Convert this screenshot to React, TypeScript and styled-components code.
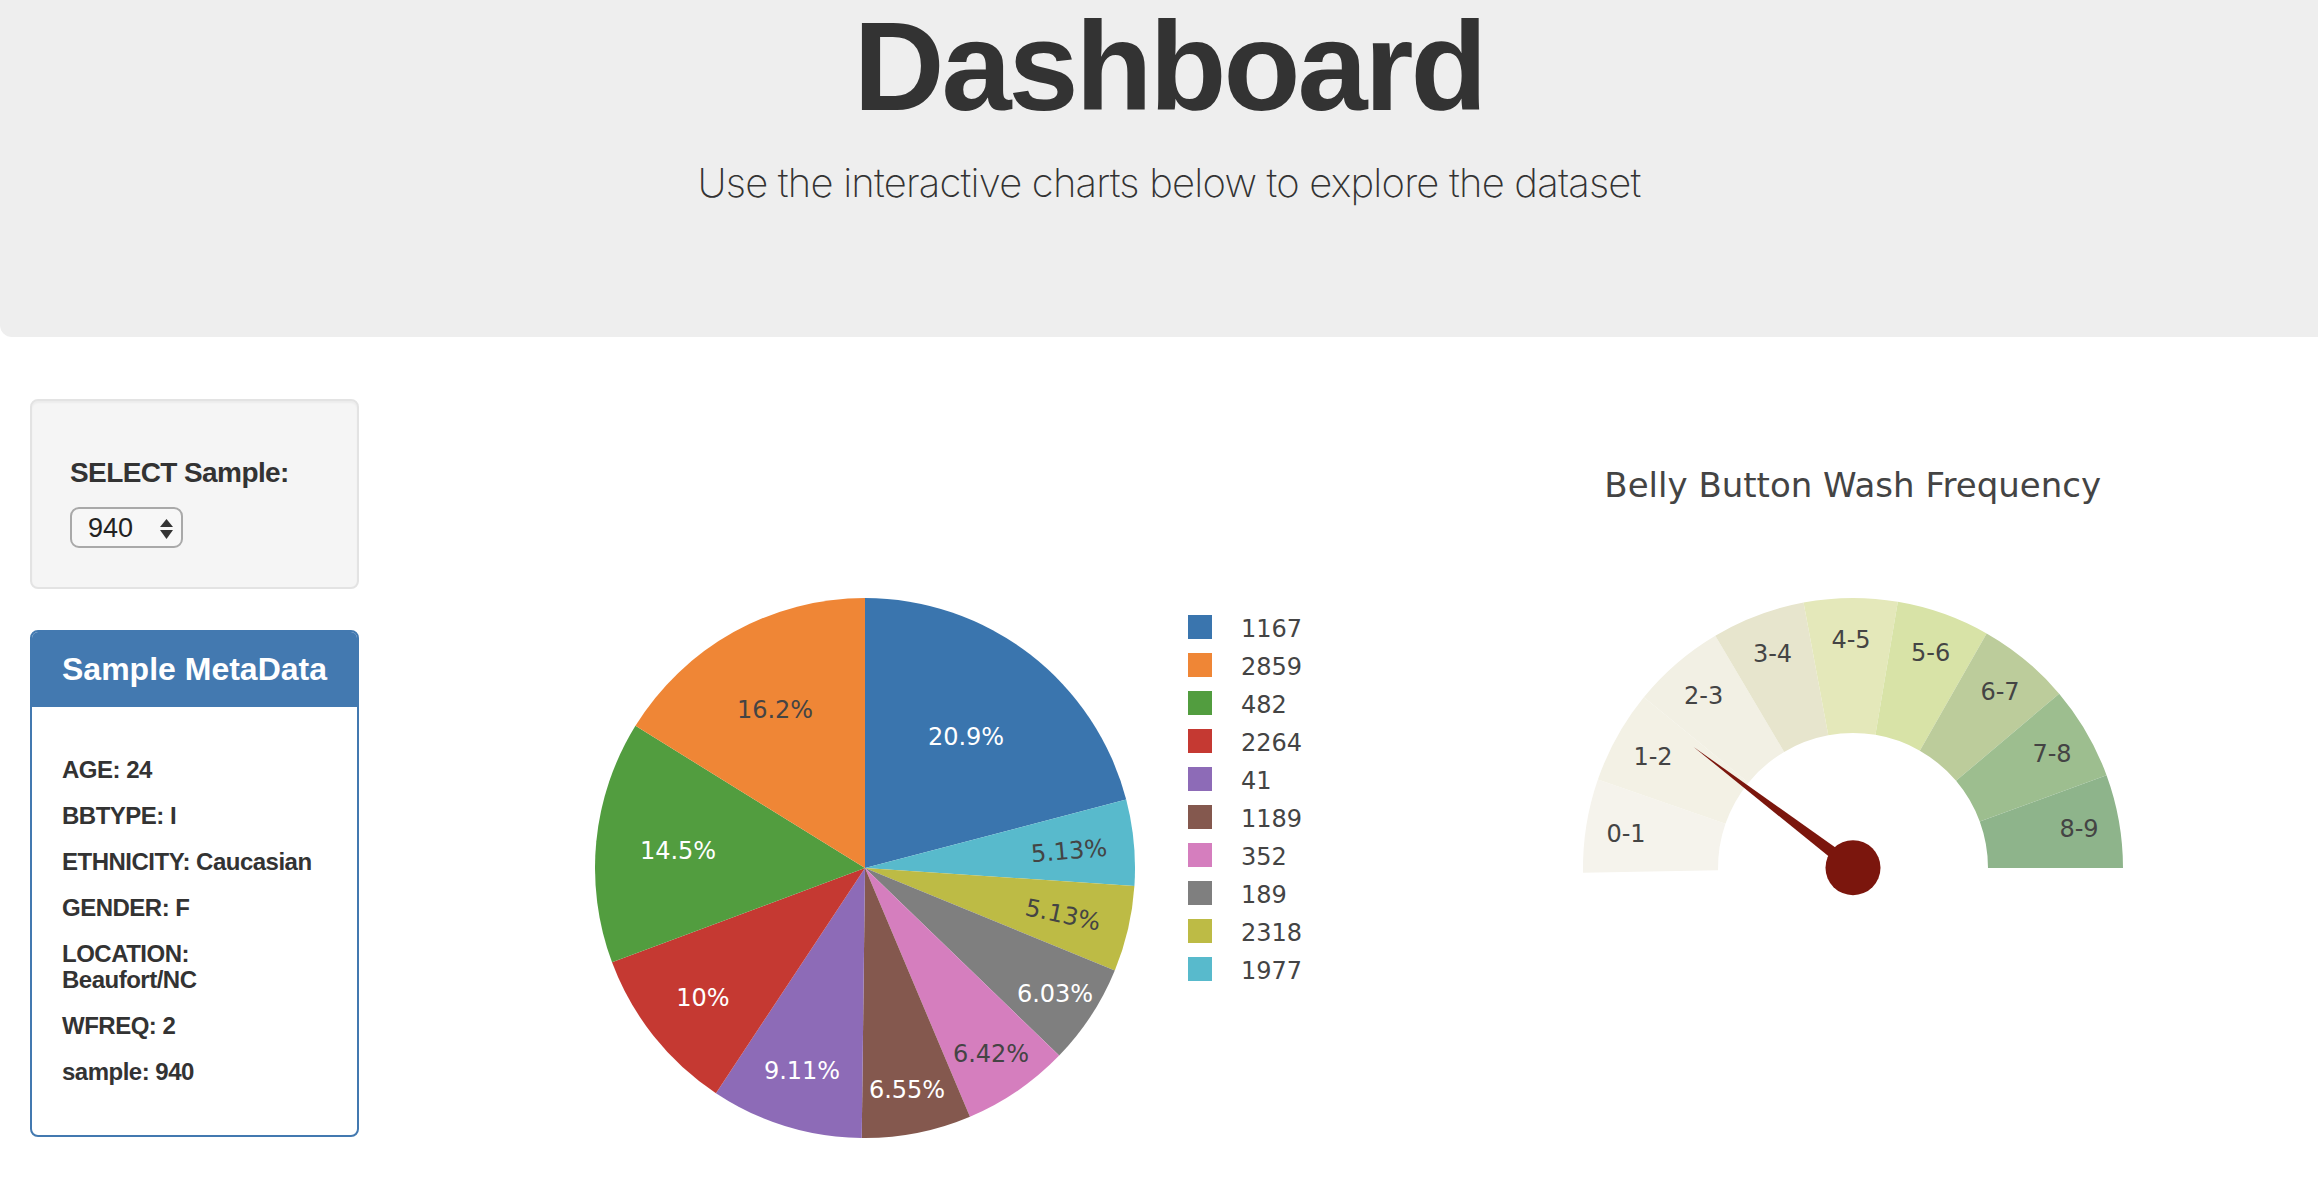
import React from "react";
import styled, { createGlobalStyle } from "styled-components";

const GlobalStyle = createGlobalStyle`
  html, body { margin: 0; padding: 0; background: #ffffff; overflow: hidden; }
  body { font-family: "Liberation Sans", Arial, sans-serif; color: #333333; }
  * { box-sizing: border-box; }
`;

const Page = styled.div`
  width: 2318px;
  min-height: 1196px;
`;

const Jumbotron = styled.header`
  width: 2338px;
  height: 337px;
  background: #eeeeee;
  border-bottom-left-radius: 12px;
  display: flex;
  flex-direction: column;
  align-items: center;
`;

const Title = styled.h1`
  margin: 4px 0 0 0;
  font-family: "Liberation Sans", Arial, sans-serif;
  font-size: 126px;
  line-height: 126px;
  font-weight: 700;
  letter-spacing: -3px;
  color: #333333;
`;

const Lead = styled.p`
  margin: 32px 0 0 0;
  font-family: "Inter", "Liberation Sans", sans-serif;
  font-size: 40px;
  line-height: 42px;
  font-weight: 200;
  letter-spacing: -0.8px;
  color: #333333;
`;

const MainRow = styled.main`
  display: flex;
  align-items: flex-start;
  padding-left: 30px;
  margin-top: 62px;
`;

const Sidebar = styled.aside`
  width: 329px;
  display: flex;
  flex-direction: column;
  gap: 41px;
`;

const Well = styled.section`
  height: 190px;
  padding: 38px;
  background: #f5f5f5;
  border: 2px solid #e3e3e3;
  border-radius: 8px;
  box-shadow: inset 0 2px 2px rgba(0, 0, 0, 0.04);
`;

const SelectLabel = styled.h5`
  margin: 18px 0 19px 0;
  font-size: 28px;
  line-height: 31px;
  font-weight: 700;
  letter-spacing: -0.6px;
  color: #333333;
`;

const SelectWrap = styled.div`
  position: relative;
  width: 113px;
  height: 41px;
`;

const NativeSelect = styled.select`
  appearance: none;
  -webkit-appearance: none;
  width: 113px;
  height: 41px;
  padding: 0 0 0 16px;
  border: 2px solid #a9a9a9;
  border-radius: 9px;
  background: #f7f7f7;
  font-family: "Liberation Sans", Arial, sans-serif;
  font-size: 27px;
  color: #222222;
  outline: none;
`;

const SelectArrows = styled.svg`
  position: absolute;
  right: 10px;
  top: 12px;
  pointer-events: none;
`;

const Panel = styled.section`
  border: 2px solid #4379b0;
  border-radius: 8px;
  overflow: hidden;
  background: #ffffff;
`;

const PanelHeading = styled.div`
  padding: 20px 30px;
  background: #4379b0;
`;

const PanelTitle = styled.h3`
  margin: 0;
  font-size: 32px;
  line-height: 35px;
  font-weight: 700;
  color: #ffffff;
`;

const PanelBody = styled.div`
  padding: 30px;
  display: flex;
  flex-direction: column;
`;

const MetaItem = styled.h6`
  margin: 20px 0;
  font-size: 24px;
  line-height: 26px;
  font-weight: 700;
  letter-spacing: -0.5px;
  color: #333333;
  & + & { margin-top: 0; }
`;

const Charts = styled.div`
  display: flex;
  margin-left: 27px;
`;

const ChartSvg = styled.svg`
  display: block;
  flex: none;
`;

const PieLabel = styled.text<{ $dark?: boolean }>`
  font-family: "DejaVu Sans", Verdana, sans-serif;
  font-size: 24px;
  fill: ${(p) => (p.$dark ? "#444444" : "#ffffff")};
`;

const LegendText = styled.text`
  font-family: "DejaVu Sans", Verdana, sans-serif;
  font-size: 24px;
  fill: #444444;
`;

const GaugeTitle = styled.text`
  font-family: "DejaVu Sans", Verdana, sans-serif;
  font-size: 34px;
  fill: #444444;
`;

const GaugeLabel = styled.text`
  font-family: "DejaVu Sans", Verdana, sans-serif;
  font-size: 24px;
  fill: #444444;
`;

const metadata = [
  "AGE: 24",
  "BBTYPE: I",
  "ETHNICITY: Caucasian",
  "GENDER: F",
  "LOCATION: Beaufort/NC",
  "WFREQ: 2",
  "sample: 940",
];

type Slice = { id: string; value: number; color: string; dark: boolean; label: string; lx: number; ly: number; rot?: number };

const legendOrder = [
  { id: "1167", color: "#3a75ae" },
  { id: "2859", color: "#ef8636" },
  { id: "482", color: "#529d3f" },
  { id: "2264", color: "#c53932" },
  { id: "41", color: "#8d6bb7" },
  { id: "1189", color: "#84584e" },
  { id: "352", color: "#d57ebe" },
  { id: "189", color: "#7f7f7f" },
  { id: "2318", color: "#bdbb45" },
  { id: "1977", color: "#58bacc" },
];

// clockwise from 12 o'clock
const pieSlices: Slice[] = [
  { id: "1167", value: 163, color: "#3a75ae", dark: false, label: "20.9%", lx: 580, ly: 346 },
  { id: "1977", value: 40, color: "#58bacc", dark: true, label: "5.13%", lx: 683, ly: 452, rot: -5 },
  { id: "2318", value: 40, color: "#bdbb45", dark: true, label: "5.13%", lx: 677, ly: 516, rot: 12 },
  { id: "189", value: 47, color: "#7f7f7f", dark: false, label: "6.03%", lx: 669, ly: 603 },
  { id: "352", value: 50, color: "#d57ebe", dark: true, label: "6.42%", lx: 605, ly: 663 },
  { id: "1189", value: 51, color: "#84584e", dark: false, label: "6.55%", lx: 521, ly: 699 },
  { id: "41", value: 71, color: "#8d6bb7", dark: false, label: "9.11%", lx: 416, ly: 680 },
  { id: "2264", value: 78, color: "#c53932", dark: false, label: "10%", lx: 317, ly: 607 },
  { id: "482", value: 113, color: "#529d3f", dark: false, label: "14.5%", lx: 292, ly: 460 },
  { id: "2859", value: 126, color: "#ef8636", dark: true, label: "16.2%", lx: 389, ly: 319 },
];

const rad = (d: number) => (d * Math.PI) / 180;
const pt = (cx: number, cy: number, r: number, th: number) =>
  [cx + r * Math.sin(rad(th)), cy - r * Math.cos(rad(th))] as const;

function wedge(cx: number, cy: number, r: number, a0: number, a1: number) {
  const [x0, y0] = pt(cx, cy, r, a0);
  const [x1, y1] = pt(cx, cy, r, a1);
  const large = a1 - a0 > 180 ? 1 : 0;
  return `M${cx},${cy} L${x0},${y0} A${r},${r} 0 ${large} 1 ${x1},${y1} Z`;
}

function annulus(cx: number, cy: number, R: number, r: number, a0: number, a1: number) {
  const [ox0, oy0] = pt(cx, cy, R, a0);
  const [ox1, oy1] = pt(cx, cy, R, a1);
  const [ix1, iy1] = pt(cx, cy, r, a1);
  const [ix0, iy0] = pt(cx, cy, r, a0);
  return `M${ox0},${oy0} A${R},${R} 0 0 1 ${ox1},${oy1} L${ix1},${iy1} A${r},${r} 0 0 0 ${ix0},${iy0} Z`;
}

function PieChart() {
  const cx = 479;
  const cy = 469;
  const r = 270;
  const total = pieSlices.reduce((s, x) => s + x.value, 0);
  let acc = 0;
  const paths = pieSlices.map((s) => {
    const a0 = (acc / total) * 360;
    acc += s.value;
    const a1 = (acc / total) * 360;
    return <path key={s.id} d={wedge(cx, cy, r, a0, a1)} fill={s.color} />;
  });
  return (
    <ChartSvg width={1000} height={790} viewBox="0 0 1000 790">
      {paths}
      {pieSlices.map((s) =>
        s.rot !== undefined ? (
          <PieLabel
            key={"t" + s.id}
            $dark={s.dark}
            x={s.lx}
            y={s.ly}
            textAnchor="middle"
            dominantBaseline="central"
            transform={`rotate(${s.rot} ${s.lx} ${s.ly})`}
          >
            {s.label}
          </PieLabel>
        ) : (
          <PieLabel key={"t" + s.id} $dark={s.dark} x={s.lx} y={s.ly} textAnchor="middle">
            {s.label}
          </PieLabel>
        )
      )}
      {legendOrder.map((l, i) => (
        <g key={"l" + l.id}>
          <rect x={802} y={216 + i * 38} width={24} height={24} fill={l.color} />
          <LegendText x={855} y={238 + i * 38}>
            {l.id}
          </LegendText>
        </g>
      ))}
    </ChartSvg>
  );
}

const gaugeColors = [
  "#f5f3ec",
  "#f3f1e5",
  "#f2f0e4",
  "#e7e5cd",
  "#e4e8ba",
  "#d8e3a7",
  "#bccc9b",
  "#9dbe8f",
  "#8eb48b",
];

const gaugeLabels = [
  { t: "0-1", x: 240, y: 442.7 },
  { t: "1-2", x: 267, y: 366 },
  { t: "2-3", x: 317.7, y: 305 },
  { t: "3-4", x: 386.5, y: 262.7 },
  { t: "4-5", x: 465, y: 248.7 },
  { t: "5-6", x: 544.7, y: 261.7 },
  { t: "6-7", x: 614, y: 301 },
  { t: "7-8", x: 666, y: 362.7 },
  { t: "8-9", x: 693, y: 437.7 },
];

function Gauge() {
  const cx = 467;
  const cy = 469;
  const R = 270;
  const r = 135;
  const start = -91;
  const step = 181 / 9;
  return (
    <ChartSvg width={932} height={790} viewBox="0 0 932 790">
      <GaugeTitle x={466.7} y={98.3} textAnchor="middle">
        Belly Button Wash Frequency
      </GaugeTitle>
      {gaugeColors.map((c, i) => (
        <path key={i} d={annulus(cx, cy, R, r, start + step * i, start + step * (i + 1))} fill={c} />
      ))}
      {gaugeLabels.map((l) => (
        <GaugeLabel key={l.t} x={l.x} y={l.y} textAnchor="middle">
          {l.t}
        </GaugeLabel>
      ))}
      <polygon points={`307.3,347.7 467,461 467,477`} fill="#7b160d" />
      <circle cx={467} cy={468.7} r={27.5} fill="#7b160d" />
    </ChartSvg>
  );
}

export default function App() {
  return (
    <Page>
      <GlobalStyle />
      <Jumbotron>
        <Title>Dashboard</Title>
        <Lead>Use the interactive charts below to explore the dataset</Lead>
      </Jumbotron>
      <MainRow>
        <Sidebar>
          <Well>
            <SelectLabel>SELECT Sample:</SelectLabel>
            <SelectWrap>
              <NativeSelect defaultValue="940">
                <option value="940">940</option>
                <option value="941">941</option>
                <option value="943">943</option>
              </NativeSelect>
              <SelectArrows width={13} height={21} viewBox="0 0 13 21">
                <polygon points="6.5,0 13,8 0,8" fill="#333" />
                <polygon points="0,11 13,11 6.5,20" fill="#333" />
              </SelectArrows>
            </SelectWrap>
          </Well>
          <Panel>
            <PanelHeading>
              <PanelTitle>Sample MetaData</PanelTitle>
            </PanelHeading>
            <PanelBody>
              {metadata.map((m) => (
                <MetaItem key={m}>{m}</MetaItem>
              ))}
            </PanelBody>
          </Panel>
        </Sidebar>
        <Charts>
          <PieChart />
          <Gauge />
        </Charts>
      </MainRow>
    </Page>
  );
}
